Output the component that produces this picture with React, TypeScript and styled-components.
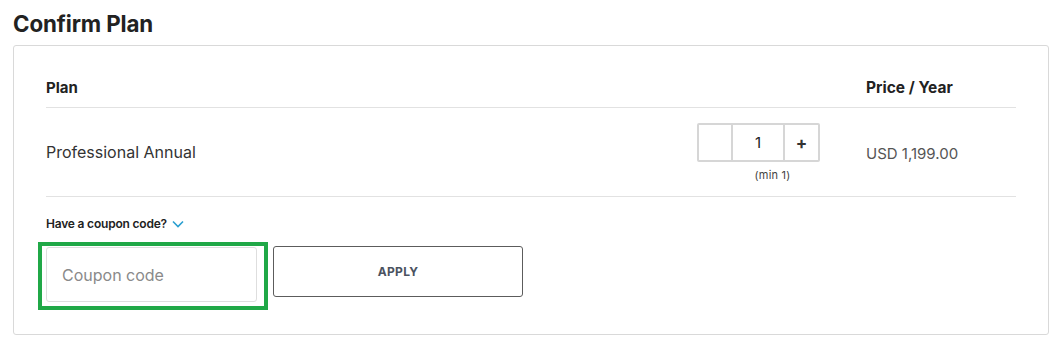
import React from "react";
import styled, { createGlobalStyle } from "styled-components";

const Global = createGlobalStyle`
  html, body { margin: 0; padding: 0; background: #fff; }
  body { font-family: Inter, "Noto Sans", Arial, sans-serif; color: #222; }
  * { box-sizing: border-box; }
`;

const Page = styled.div`
  padding: 11px 13px 0 13px;
  width: 1062px;
`;

const Title = styled.h1`
  margin: 0 0 9px 0;
  font-size: 22.3px;
  line-height: 25px;
  font-weight: 700;
  color: #222;
  letter-spacing: -0.1px;
`;

const Card = styled.div`
  width: 1036px;
  height: 290px;
  border: 1px solid #d9d9d9;
  border-radius: 3px;
  padding: 0 32px 0 32px;
  display: flex;
  flex-direction: column;
`;

const Grid = styled.div`
  display: grid;
  grid-template-columns: 1fr 123px 150px;
  column-gap: 46px;
`;

const HeaderRow = styled(Grid)`
  height: 62px;
  align-items: end;
  padding-bottom: 10px;
  border-bottom: 1px solid #e2e2e2;
`;

const HeadCell = styled.div`
  font-size: 15px;
  font-weight: 700;
  color: #222;
  line-height: 18px;
`;

const WideHead = styled(HeadCell)`
  font-size: 15.5px;
`;

const ItemRow = styled(Grid)`
  height: 89px;
  align-items: center;
  border-bottom: 1px solid #e2e2e2;
`;

const PlanName = styled.div`
  font-size: 16px;
  color: #333;
`;

const Price = styled.div`
  font-size: 15px;
  color: #555;
  padding-top: 2px;
`;

const QtyWrap = styled.div`
  display: flex;
  flex-direction: column;
  align-items: center;
  padding-top: 1px;
`;

const Stepper = styled.div`
  display: flex;
  height: 39px;
  width: 123px;
  border: 2px solid #d6d6d6;
  border-radius: 2px;
`;

const StepBtn = styled.button<{ $w: number }>`
  width: ${(p) => p.$w}px;
  border: none;
  background: #fff;
  font-family: inherit;
  font-size: 17px;
  font-weight: 700;
  color: #333;
  padding: 0;
  cursor: pointer;
`;

const QtyInput = styled.div`
  flex: 1;
  border-left: 2px solid #d6d6d6;
  border-right: 2px solid #d6d6d6;
  display: flex;
  align-items: center;
  justify-content: center;
  font-size: 15px;
  color: #222;
`;

const MinNote = styled.div`
  margin-top: 6px;
  padding-left: 28px;
  font-size: 11px;
  color: #444;
  letter-spacing: 0.2px;
`;

const CouponToggle = styled.div`
  margin-top: 19px;
  display: flex;
  align-items: center;
  gap: 5px;
  font-size: 12px;
  font-weight: 600;
  color: #222;
  letter-spacing: -0.2px;
`;

const CouponRow = styled.div`
  margin-top: 11px;
  margin-left: -8px;
  display: flex;
  align-items: flex-start;
  gap: 5px;
`;

const FocusFrame = styled.div`
  border: 4px solid #20a847;
  padding: 1px 7px 4px 4px;
`;

const CouponInput = styled.input`
  width: 211px;
  height: 55px;
  border: 1px solid #dedede;
  border-radius: 3px;
  padding: 0 15px;
  font-family: inherit;
  font-size: 16px;
  color: #333;
  outline: none;
  &::placeholder { color: #8a8a8a; }
`;

const ApplyButton = styled.button`
  margin-top: 4px;
  width: 250px;
  height: 51px;
  border: 1px solid #5c5c5c;
  border-radius: 3px;
  background: #fff;
  font-family: inherit;
  font-size: 12px;
  font-weight: 700;
  color: #4a5260;
  letter-spacing: 0.3px;
  cursor: pointer;
`;

const Chevron = () => (
  <svg width="12" height="8" viewBox="0 0 12 8" fill="none">
    <path d="M1 1.5L6 6.5L11 1.5" stroke="#2a9fd0" strokeWidth="1.6" />
  </svg>
);

export default function App() {
  return (
    <Page>
      <Global />
      <Title>Confirm Plan</Title>
      <Card>
        <HeaderRow>
          <HeadCell>Plan</HeadCell>
          <div />
          <WideHead>Price / Year</WideHead>
        </HeaderRow>
        <ItemRow>
          <PlanName>Professional Annual</PlanName>
          <QtyWrap>
            <Stepper>
              <StepBtn $w={32} aria-label="decrease" />
              <QtyInput>1</QtyInput>
              <StepBtn $w={33}>+</StepBtn>
            </Stepper>
            <MinNote>(min 1)</MinNote>
          </QtyWrap>
          <Price>USD 1,199.00</Price>
        </ItemRow>
        <CouponToggle>
          Have a coupon code? <Chevron />
        </CouponToggle>
        <CouponRow>
          <FocusFrame>
            <CouponInput placeholder="Coupon code" />
          </FocusFrame>
          <ApplyButton>APPLY</ApplyButton>
        </CouponRow>
      </Card>
    </Page>
  );
}
